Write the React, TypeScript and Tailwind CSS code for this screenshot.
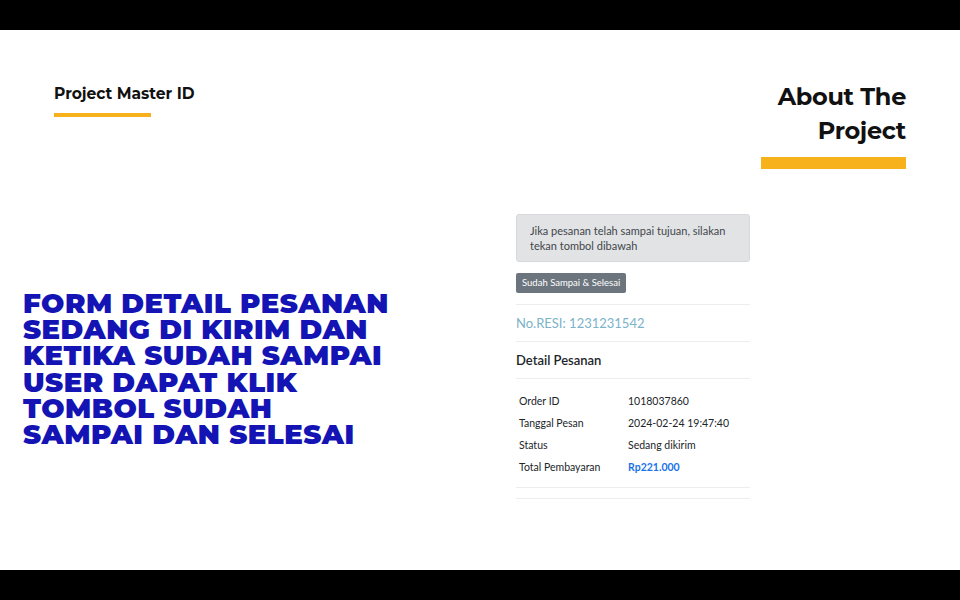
import React from "react";

const ui = { fontFamily: 'Lato, "Open Sans", "Noto Sans", sans-serif' };
const head = { fontFamily: 'Montserrat, Inter, "DejaVu Sans", sans-serif' };

export default function App() {
  const rows: [string, string, boolean?][] = [
    ["Order ID", "1018037860"],
    ["Tanggal Pesan", "2024-02-24 19:47:40"],
    ["Status", "Sedang dikirim"],
    ["Total Pembayaran", "Rp221.000", true],
  ];
  return (
    <div className="w-[960px] h-[600px] flex flex-col bg-black overflow-hidden">
      <div className="h-[30px] bg-black" />
      <div className="h-[540px] bg-white flex flex-col">
        <div className="flex justify-between items-start px-[54px] pt-[50px]" style={head}>
          <div className="mt-[4px]">
            <div className="text-[15.5px] leading-[20px] font-bold text-[#111]">Project Master ID</div>
            <div className="w-[97px] h-[4px] bg-[#f7b21b] mt-[9px]" />
          </div>
          <div className="flex flex-col items-end">
            <div className="text-[24px] leading-[34px] font-bold text-[#111] text-right tracking-[-0.3px]">
              About The
              <br />
              Project
            </div>
            <div className="w-[145px] h-[12px] bg-[#f7b21b] mt-[9px]" />
          </div>
        </div>
        <div className="flex mt-[45px]">
          <div className="w-[516px] pl-[23px] pt-[76px]">
            <div
              className="text-[27.5px] leading-[26.2px] font-black text-[#1414b4] uppercase tracking-[0.5px]"
              style={head}
            >
              FORM DETAIL PESANAN
              <br />
              SEDANG DI KIRIM DAN
              <br />
              KETIKA SUDAH SAMPAI
              <br />
              USER DAPAT KLIK
              <br />
              TOMBOL SUDAH
              <br />
              SAMPAI DAN SELESAI
            </div>
          </div>
          <div className="w-[234px] flex flex-col" style={ui}>
            <div className="h-[48px] bg-[#e2e3e5] border border-[#d6d8db] rounded-[3px] px-[13px] pt-[8px] text-[11px] leading-[15px] text-[#41464b]">
              Jika pesanan telah sampai tujuan, silakan tekan tombol dibawah
            </div>
            <div className="mt-[11px] flex">
              <div className="flex items-center h-[20px] px-[6px] bg-[#6c757d] rounded-[2px] text-white text-[9.5px]">
                Sudah Sampai &amp; Selesai
              </div>
            </div>
            <div className="mt-[11px] border-t border-[#ebedef]" />
            <div className="mt-[9px] text-[13px] leading-[18px] text-[#7bb3c8]">No.RESI: 1231231542</div>
            <div className="mt-[9px] border-t border-[#ebedef]" />
            <div className="mt-[9px] text-[13px] leading-[18px] font-semibold text-[#212529]">Detail Pesanan</div>
            <div className="mt-[9px] border-t border-[#ebedef]" />
            <div className="mt-[12px] flex flex-col">
              {rows.map(([k, v, b]) => (
                <div key={k} className="flex h-[22px] items-center text-[10.5px] text-[#212529]">
                  <div className="w-[112px] pl-[3px]">{k}</div>
                  <div className={b ? "font-bold text-[#1a73e8]" : ""}>{v}</div>
                </div>
              ))}
            </div>
            <div className="mt-[8px] border-t border-[#ebedef]" />
            <div className="mt-[10px] border-t border-[#ebedef]" />
          </div>
        </div>
      </div>
      <div className="h-[30px] bg-black" />
    </div>
  );
}
